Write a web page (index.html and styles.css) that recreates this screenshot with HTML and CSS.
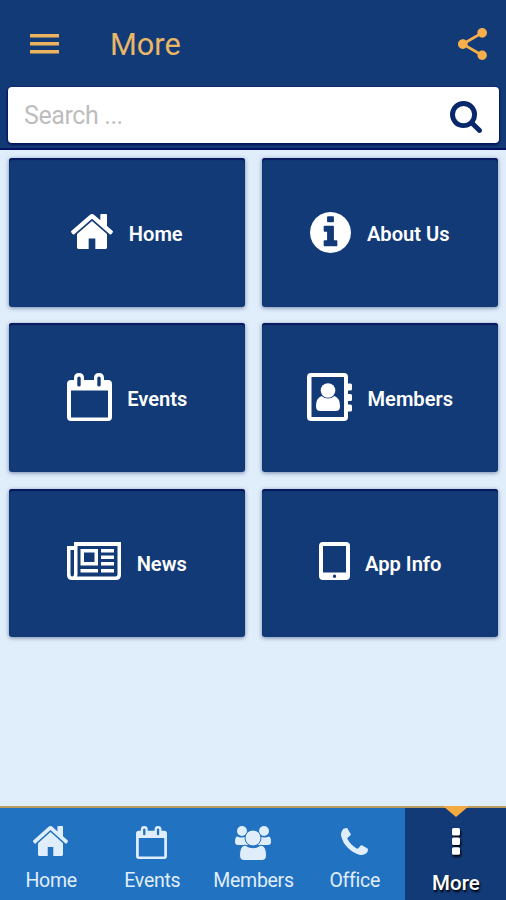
FILE: index.html
```html
<!DOCTYPE html>
<html lang="en">
<head>
<meta charset="utf-8">
<title>More</title>
<link rel="stylesheet" href="styles.css">
</head>
<body>
<svg class="defs" width="0" height="0">
  <symbol id="home" viewBox="26 253 1612 1283" preserveAspectRatio="none"><path d="M1408 992v480q0 26-19 45t-45 19H960v-384H704v384H320q-26 0-45-19t-19-45V992q0-1 .5-3t.5-3l575-474 575 474q1 2 1 6zm223-69l-62 74q-8 9-21 11h-3q-13 0-21-7L832 424 140 1001q-12 8-24 7-13-2-21-11l-62-74q-8-10-7-23.500t11-21.500l719-599q32-26 76-26t76 26l244 204V288q0-14 9-23t23-9h192q14 0 23 9t9 23v408l219 182q10 8 11 21.500t-7 23.500z"/></symbol>
  <symbol id="calendar" viewBox="0 0 45 48"><path fill-rule="evenodd" d="M3 7H7V5Q7 0 12 0T17 5V7H27V5Q27 0 32 0T37 5V7H41Q45 7 45 11V44Q45 48 41 48H4Q0 48 0 44V11Q0 7 4 7ZM4 17.500V44.500H41V17.500ZM12 3.500Q10.300 3.500 10.300 5V12Q10.300 13.500 12 13.500T13.700 12V5Q13.700 3.500 12 3.500ZM32 3.500Q30.300 3.500 30.300 5V12Q30.300 13.500 32 13.500T33.700 12V5Q33.700 3.500 32 3.500Z"/></symbol>
</svg>
<div class="app">
  <header class="header">
    <div class="bar">
      <svg class="menu" viewBox="0 0 29 20"><path d="M0 0h29v3.500H0zM0 8h29v3.500H0zM0 16h29v3.500H0z"/></svg>
      <h1>More</h1>
      <svg class="share" viewBox="3 2 18 19.920" preserveAspectRatio="none"><path d="M18 16.080c-.76 0-1.440.3-1.960.77L8.910 12.700c.05-.23.09-.46.09-.7s-.04-.47-.09-.7l7.050-4.110c.54.5 1.250.81 2.040.81 1.660 0 3-1.340 3-3s-1.340-3-3-3-3 1.340-3 3c0 .24.04.47.09.7L8.040 9.810C7.500 9.310 6.790 9 6 9c-1.660 0-3 1.340-3 3s1.340 3 3 3c.79 0 1.500-.31 2.040-.81l7.120 4.160c-.05.21-.08.43-.08.65 0 1.610 1.310 2.920 2.920 2.920s2.920-1.310 2.920-2.920-1.310-2.920-2.920-2.920z"/></svg>
    </div>
    <div class="search">
      <span>Search ...</span>
      <svg viewBox="64 128 1664 1664"><path d="M1216 832q0-185-131.500-316.500T768 384 451.500 515.500 320 832t131.500 316.500T768 1280t316.500-131.500T1216 832zm512 832q0 52-38 90t-90 38q-54 0-90-38l-343-342q-179 124-399 124-143 0-273.500-55.500t-225-150-150-225T64 832t55.500-273.500 150-225 225-150T768 128t273.500 55.500 225 150 150 225T1472 832q0 220-124 399l343 343q37 37 37 90z"/></svg>
    </div>
  </header>
  <main class="grid">
    <a class="tile"><svg class="i-home"><use href="#home"/></svg><span>Home</span></a>
    <a class="tile"><svg class="i-info" viewBox="128 128 1536 1536"><path d="M1152 1376v-160q0-14-9-23t-23-9h-96V672q0-14-9-23t-23-9H672q-14 0-23 9t-9 23v160q0 14 9 23t23 9h96v320h-96q-14 0-23 9t-9 23v160q0 14 9 23t23 9h448q14 0 23-9t9-23zm-128-896V320q0-14-9-23t-23-9H800q-14 0-23 9t-9 23v160q0 14 9 23t23 9h192q14 0 23-9t9-23zm640 416q0 209-103 385.500T1281.500 1561 896 1664t-385.500-103T231 1281.500 128 896t103-385.500T510.500 231 896 128t385.500 103T1561 510.500 1664 896z"/></svg><span>About Us</span></a>
    <a class="tile"><svg class="i-calendar"><use href="#calendar"/></svg><span>Events</span></a>
    <a class="tile"><svg class="i-book" viewBox="0 0 45 48"><path fill-rule="evenodd" d="M4 0H37Q41 0 41 4V10.500H43.500Q45 10.500 45 12V16Q45 17.500 43.500 17.500H41V21H43.500Q45 21 45 22.500V26.500Q45 28 43.500 28H41V31.500H43.500Q45 31.500 45 33V37Q45 38.500 43.500 38.500H41V44Q41 48 37 48H4Q0 48 0 44V4Q0 0 4 0ZM4.500 4V44H37V4Z"/><circle cx="21" cy="17.500" r="7.300"/><path d="M14.500 23Q9 25 9 33.500Q9 38 13.500 38H28.500Q33 38 33 33.500Q33 25 27.500 23Q21 28 14.500 23Z"/></svg><span>Members</span></a>
    <a class="tile"><svg class="i-news" viewBox="0 0 54 38"><path fill-rule="evenodd" d="M7 0H54V33Q54 38 49 38H5Q0 38 0 33V4H7ZM10.500 4V33L10 34.500H48.500Q50.500 34.500 50.500 32.500V4ZM3.500 8V32Q3.500 34.500 5.300 34.500T7 32V8Z"/><path fill-rule="evenodd" d="M13.500 7H31V23.500H13.500ZM17 10.500V20H27.500V10.500Z"/><path d="M34 7h13v3.500H34zM34 13.500h13v3.500H34zM34 20h13v3.500H34zM34 27h13v3.500H34zM13.500 27H31v3.500H13.500z"/></svg><span>News</span></a>
    <a class="tile"><svg class="i-tablet" viewBox="0 0 31 38"><path fill-rule="evenodd" d="M4 0H27Q31 0 31 4V34Q31 38 27 38H4Q0 38 0 34V4Q0 0 4 0ZM4 4V30.500H27V4ZM15.500 32.500A1.700 1.700 0 1 0 15.500 35.900A1.700 1.700 0 1 0 15.500 32.500Z"/></svg><span>App Info</span></a>
  </main>
  <nav class="tabs">
    <a class="tab"><svg class="t-home"><use href="#home"/></svg><span>Home</span></a>
    <a class="tab"><svg class="t-calendar"><use href="#calendar"/></svg><span>Events</span></a>
    <a class="tab"><svg class="t-users" viewBox="0 0 36 34"><circle cx="7" cy="5" r="5"/><circle cx="29" cy="5" r="5"/><path d="M2 10.500Q6.500 12.500 11 10.500L13 19H3Q0 19 0 16Q0 11 2 10.500ZM34 10.500Q29.500 12.500 25 10.500L23 19H33Q36 19 36 16Q36 11 34 10.500Z"/><circle class="gap" cx="18" cy="12" r="8"/><path class="gap" d="M10 19Q18 24.500 26 19Q31.500 20 31.500 29Q31.500 34.500 27 34.500H9Q4.500 34.500 4.500 29Q4.500 20 10 19Z"/></svg><span>Members</span></a>
    <a class="tab"><svg class="t-phone" viewBox="192 128 1408 1408"><path d="M1600 1240q0 27-10 70.500t-21 68.500q-21 50-122 106-94 51-186 51-27 0-53-3.500t-57.500-12.500-47-14.500-55.500-20.500-49-18q-98-35-175-83-127-79-264-216T344 904q-48-77-83-175-3-9-18-49t-20.500-55.500-14.500-47-12.500-57.500-3.500-53q0-92 51-186 56-101 106-122 25-11 68.500-21t70.500-10q14 0 21 3 18 6 53 76 11 19 30 54t35 63.500 31 53.500q3 4 17.500 25t21.500 35.500 7 28.500q0 20-28.500 50t-62 55-62 53-28.500 46q0 9 5 22.500t8.500 20.500 14 24 11.500 19q76 137 174 235t235 174q2 1 19 11.500t24 14 20.500 8.500 22.500 5q18 0 46-28.500t53-62 55-62 50-28.500q14 0 28.500 7t35.500 21.500 25 17.500q25 15 53.500 31t63.500 35 54 30q70 35 76 53 3 7 3 21z"/></svg><span>Office</span></a>
    <a class="tab active"><svg class="t-more" viewBox="0 0 8 27"><rect width="8" height="7.500" rx="1.500"/><rect y="9.600" width="8" height="7.500" rx="1.500"/><rect y="19.200" width="8" height="7.500" rx="1.500"/></svg><span>More</span></a>
  </nav>
</div>
</body>
</html>
```
FILE: styles.css
```css
* { box-sizing: border-box; }
body { margin: 0; font-family: Roboto, "Liberation Sans", sans-serif; }
svg { display: block; flex: none; fill: currentColor; }
.defs { position: absolute; }
.app { display: flex; flex-direction: column; height: 900px; background: #e0eefb; overflow: hidden; }
.header { height: 150px; background: #123a76; border-bottom: 2px solid #06115f; padding: 0 7px 0 8px; flex: none; }
.bar { height: 87px; display: flex; align-items: center; padding: 1px 12px 0 22px; color: #f5b04c; }
.menu { width: 29px; height: 20px; color: #eab35c; }
.bar h1 { margin: 1px auto 0 51px; font-size: 30.700px; font-weight: 400; line-height: 36px; color: #eab766; }
.share { width: 29px; height: 32px; }
.search { height: 56px; background: #fff; border-radius: 4px; box-shadow: 0 1px 2px 1px #061357; display: flex; align-items: center; justify-content: space-between; padding: 0 17px 0 16px; }
.search span { font-size: 25px; line-height: 30px; letter-spacing: -0.4px; color: #bdbdbd; margin-top: 2px; }
.search svg { width: 32px; height: 32px; color: #08286b; margin-top: 4px; }
.grid { flex: 1; display: grid; grid-template-columns: 236px 236px; grid-auto-rows: 148.500px; gap: 16.700px 17px; padding: 8.300px 8px 0 9px; }
.tile { display: flex; align-items: center; justify-content: center; gap: 16px; background: #123a76; color: #fff; border-radius: 3px; box-shadow: 0 1px 4px #0a245880, inset 0 2px 1px #08195f; }
.tile span { font-size: 20.100px; font-weight: 600; line-height: 24px; margin-top: 3px; margin-left: -0.5px; white-space: nowrap; }
.i-home { width: 42px; height: 35px; margin-top: -3px; }
.i-info { width: 41px; height: 41px; margin-top: -1px; }
.i-calendar, .i-book { width: 45px; height: 48px; margin-top: -1px; }
.i-news { width: 54px; height: 38px; margin-top: -4px; }
.i-tablet { width: 31px; height: 38px; margin-top: -4px; }
.tabs { flex: none; height: 94px; display: grid; grid-template-columns: repeat(5, 1fr); border-top: 2px solid #b99c62; background: #2172c1; }
.tab { display: flex; flex-direction: column; align-items: center; position: relative; color: #e0edfb; }
.tab svg { margin-top: 18px; }
.tab span { font-size: 19.500px; line-height: 24px; letter-spacing: -0.3px; margin-top: auto; margin-bottom: 7px; padding-left: 1px; }
.t-home { width: 35px; height: 30px; }
.t-calendar { width: 31px; height: 33px; }
.t-users { width: 36px; height: 34px; }
.t-users .gap { stroke: #2172c1; stroke-width: 1; }
.tab .t-phone { width: 27px; height: 27px; margin-top: 20px; }
.active { background: #123a76; color: #fff; }
.tab.active svg { width: 8px; height: 27px; margin-top: 20px; margin-left: 1px; filter: drop-shadow(1px 2px 1px #000); }
.tab.active span { font-size: 20.500px; font-weight: 500; letter-spacing: 0; margin-bottom: 5px; text-shadow: 1px 2px 2px #000; }
.active::before { content: ""; position: absolute; top: -2px; left: 38px; border: solid transparent; border-width: 11px 13px 0; border-top-color: #f2aa41; }
```
